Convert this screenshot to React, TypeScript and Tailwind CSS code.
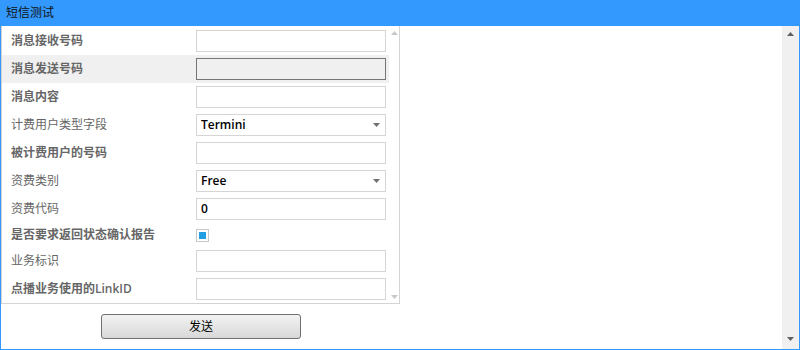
import React from 'react'

type Row = {
  label: string
  kind: 'input' | 'disabled' | 'select' | 'check'
  value?: string
  bold?: boolean
}

const rows: Row[] = [
  { label: '消息接收号码', kind: 'input', bold: true },
  { label: '消息发送号码', kind: 'disabled', bold: true },
  { label: '消息内容', kind: 'input', bold: true },
  { label: '计费用户类型字段', kind: 'select', value: 'Termini' },
  { label: '被计费用户的号码', kind: 'input', bold: true },
  { label: '资费类别', kind: 'select', value: 'Free' },
  { label: '资费代码', kind: 'input', value: '0' },
  { label: '是否要求返回状态确认报告', kind: 'check', bold: true },
  { label: '业务标识', kind: 'input' },
  { label: '点播业务使用的LinkID', kind: 'input', bold: true },
]

const font = "font-['Open_Sans','Noto_Sans_CJK_SC',sans-serif]"

function Arrow({ up, className }: { up?: boolean; className: string }) {
  return (
    <svg width="7" height="4" viewBox="0 0 7 4" className={className}>
      <path d={up ? 'M0 4 L3.5 0 L7 4 Z' : 'M0 0 L7 0 L3.5 4 Z'} fill="currentColor" />
    </svg>
  )
}

function Field({ row }: { row: Row }) {
  if (row.kind === 'check') {
    return (
      <div className="w-[13px] h-[13px] border border-[#c8c8c8] bg-white flex items-center justify-center">
        <div className="w-[7px] h-[7px] bg-[#229ee2]" />
      </div>
    )
  }
  const base = 'w-[190px] h-[22px] border flex items-center px-[4px] text-[12px] font-semibold text-black'
  if (row.kind === 'disabled') {
    return <div className={`${base} border-[#767676] bg-[#f0f0f0]`} />
  }
  return (
    <div className={`${base} border-[#d5d5d5] bg-white justify-between`}>
      <span>{row.value}</span>
      {row.kind === 'select' && <Arrow className="text-[#707070] mr-[1px]" />}
    </div>
  )
}

export default function App() {
  return (
    <div className={`w-[800px] h-[350px] flex flex-col bg-white ${font}`}>
      <div className="h-[26px] bg-[#3399ff] flex items-center pl-[6px] text-[12px] text-[#111]">短信测试</div>
      <div className="flex-1 flex border-x border-b border-[#3399ff] min-h-0">
        <div className="flex-1 flex flex-col">
          <div className="w-[399px] flex border-x border-b border-[#d4d4d4] pt-px">
            <div className="flex-1 flex flex-col">
              {rows.map((row, i) => (
                <div
                  key={row.label}
                  className={`flex items-center ${row.kind === 'check' ? 'h-[24px]' : 'h-[28px]'} ${
                    i === 1 ? 'bg-[#f0f0f0]' : ''
                  }`}
                >
                  <div
                    className={`w-[194px] pl-[9px] text-[12px] text-[#666] ${row.bold ? 'font-semibold' : ''}`}
                  >
                    {row.label}
                  </div>
                  <Field row={row} />
                </div>
              ))}
            </div>
            <div className="w-[10px] flex flex-col justify-between items-center py-[4px]">
              <Arrow up className="text-[#c8c8c8]" />
              <Arrow className="text-[#c8c8c8]" />
            </div>
          </div>
          <div className="pl-[100px] pt-[10px]">
            <button className="w-[200px] h-[25px] rounded-[3px] border border-[#707070] bg-gradient-to-b from-[#f3f3f3] to-[#d8d8d8] text-[12px] text-black flex items-center justify-center">
              发送
            </button>
          </div>
        </div>
        <div className="w-[17px] bg-[#f0f0f0] flex flex-col justify-between items-center pt-[6px] pb-[8px]">
          <Arrow up className="text-[#606060]" />
          <Arrow className="text-[#606060]" />
        </div>
      </div>
    </div>
  )
}
